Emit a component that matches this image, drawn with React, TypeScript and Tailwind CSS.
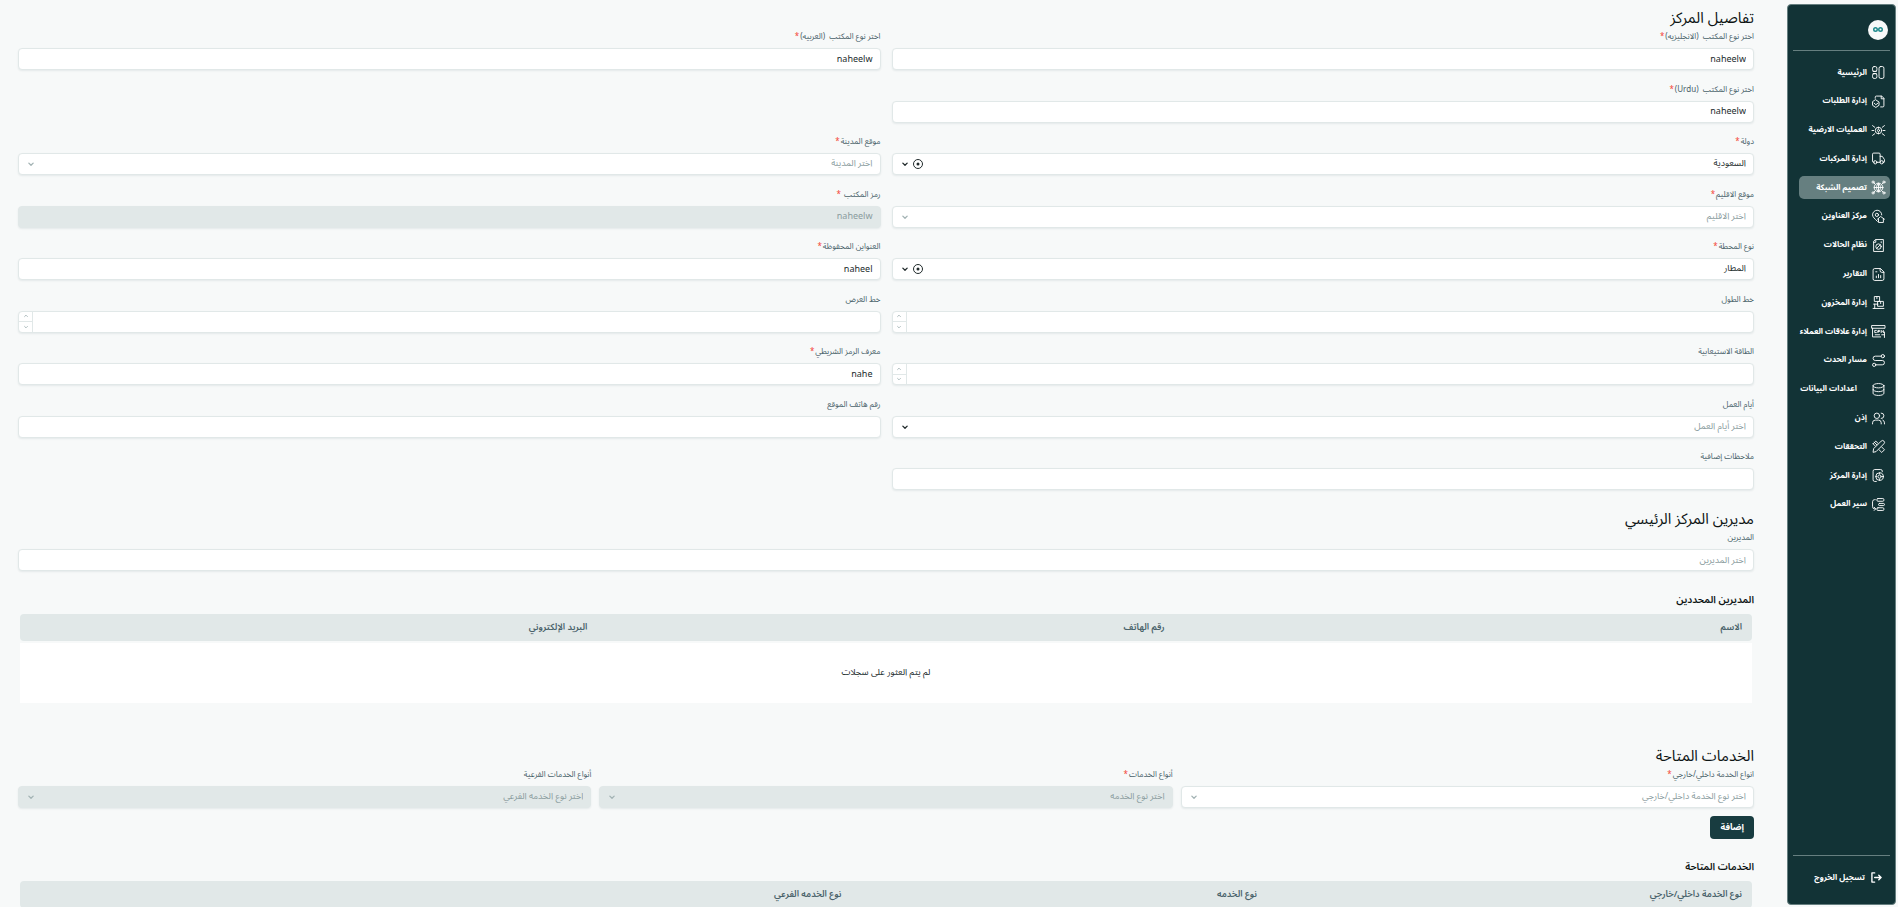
import type { ReactNode } from 'react';
import clsx from 'clsx';

const navIcons: Record<string, ReactNode> = {
    home: (
        <>
            <rect x="13" y="1" width="9" height="22" rx="3" />
            <rect x="1" y="1" width="8" height="9" rx="3" />
            <rect x="1" y="14" width="8" height="9" rx="3" />
            <path d="M2 10h6M2 14h6" />
        </>
    ),
    orders: (
        <>
            <path d="M6 6V4a2 2 0 0 1 2-2h10l4 4v14a2 2 0 0 1-2 2h-4" />
            <path d="M17 2v5h5" />
            <path d="M7 9l6 4v6l-6 4-6-4v-6z" />
            <path d="M4 15l3 3 4-3" />
        </>
    ),
    ground: (
        <>
            <circle cx="12" cy="12" r="6" />
            <circle cx="12" cy="12" r="2" />
            <path d="M0 12h3M21 12h3M1 3l4 3M23 3l-4 3M1 21l4-3M23 21l-4-3M12 6v2M12 16v2" />
        </>
    ),
    truck: (
        <>
            <path d="M4 19H3a2 2 0 0 1-2-2V4a2 2 0 0 1 2-2h10a2 2 0 0 1 2 2v15H9" />
            <path d="M15 8h4l4 6v4a1 1 0 0 1-1 1h-1" />
            <circle cx="6" cy="19" r="3" />
            <circle cx="18" cy="19" r="3" />
        </>
    ),
    network: (
        <>
            <circle cx="12" cy="12" r="8" />
            <path d="M4 12h16M12 4v16M12 4c-5 4-5 12 0 16M12 4c5 4 5 12 0 16" />
            <path d="M6 6L3 3M18 6l3-3M6 18l-3 3M18 18l3 3" />
            <circle cx="2" cy="2" r="2" />
            <circle cx="22" cy="2" r="2" />
            <circle cx="2" cy="22" r="2" />
            <circle cx="22" cy="22" r="2" />
        </>
    ),
    address: (
        <>
            <path d="M10 21C5 16 1 13 1 9a8 8 0 0 1 17 0" />
            <circle cx="9" cy="9" r="3" />
            <path d="M10 17l6-5 7 5M12 16v7h9v-7" />
        </>
    ),
    status: (
        <>
            <path d="M7 1h14v22H3V5z" />
            <path d="M3 6h4V2" />
            <circle cx="12" cy="14" r="5" />
            <path d="M9 17l6-6M17 5v2" />
        </>
    ),
    reports: (
        <>
            <path d="M15 1H5a3 3 0 0 0-3 3v16a3 3 0 0 0 3 3h14a3 3 0 0 0 3-3V8z" />
            <path d="M15 1v4a3 3 0 0 0 3 3h4M8 18v-3M12 18v-6M16 18v-4M7 7h2" />
        </>
    ),
    inventory: (
        <>
            <rect x="5" y="1" width="9" height="9" />
            <rect x="11" y="10" width="10" height="9" />
            <path d="M9 1v4M16 10v4M3 15h8M2 23h20M5 15v8" />
        </>
    ),
    crm: (
        <>
            <path d="M0 1h24v5H0zM1 6v16h15M23 13v10M18 18h5M6 18h8" />
            <path d="M8 10H5v4h3M11 14v-4h3v2h-3M17 14v-4l2 2 2-2v4" />
        </>
    ),
    route: (
        <>
            <circle cx="4" cy="20" r="3" />
            <circle cx="20" cy="4" r="3" />
            <path d="M17 4H6a4 4 0 0 0 0 8h13a4 4 0 0 1 0 8H8" />
        </>
    ),
    database: (
        <>
            <ellipse cx="12" cy="5" rx="10" ry="4" />
            <path d="M2 5v14c0 2 4 4 10 4s10-2 10-4V5M2 12c0 2 4 4 10 4s10-2 10-4" />
        </>
    ),
    users: (
        <>
            <circle cx="9" cy="7" r="5" />
            <path d="M1 22v-2a5 5 0 0 1 5-5h6a5 5 0 0 1 5 5v2M17 2a5 5 0 0 1 0 10M20 15a5 5 0 0 1 3 5v2" />
        </>
    ),
    checks: (
        <>
            <path d="M2 22l1-6L17 2a3 3 0 0 1 5 5L8 21z" />
            <path d="M9 9L4 4M2 7l5-5 4 4M18 13l5 5-5 5-5-5M2 7l4 4" />
        </>
    ),
    center: (
        <>
            <path d="M8 23H5a3 3 0 0 1-3-3V4a3 3 0 0 1 3-3h11a3 3 0 0 1 3 3v1" />
            <circle cx="14" cy="14" r="7" />
            <circle cx="14" cy="14" r="3" />
            <path d="M14 7v2M14 19v2M7 14h2M19 14h2" />
        </>
    ),
    workflow: (
        <>
            <rect x="9" y="1" width="13" height="5" rx="2" />
            <rect x="12" y="10" width="11" height="4" rx="2" />
            <rect x="9" y="18" width="13" height="5" rx="2" />
            <path d="M6 3H5a4 4 0 0 0-4 4v9a4 4 0 0 0 4 4h1M4 17l3 3-3 3" />
        </>
    ),
};

const navItems = [
    { icon: 'home', label: 'الرئيسية' },
    { icon: 'orders', label: 'إدارة الطلبات' },
    { icon: 'ground', label: 'العمليات الارضية' },
    { icon: 'truck', label: 'إدارة المركبات' },
    { icon: 'network', label: 'تصميم الشبكة', active: true },
    { icon: 'address', label: 'مركز العناوين' },
    { icon: 'status', label: 'نظام الحالات' },
    { icon: 'reports', label: 'التقارير' },
    { icon: 'inventory', label: 'إدارة المخزون' },
    { icon: 'crm', label: 'إدارة علاقات العملاء' },
    { icon: 'route', label: 'مسار الحدث' },
    { icon: 'database', label: 'اعدادات البيانات', indent: true },
    { icon: 'users', label: 'إذن' },
    { icon: 'checks', label: 'التحققات' },
    { icon: 'center', label: 'إدارة المركز' },
    { icon: 'workflow', label: 'سير العمل' },
];

function NavIcon({ name }: { name: string }) {
    return (
        <svg
            viewBox="0 0 24 24"
            className="size-[13px] shrink-0 overflow-visible"
            fill="none"
            stroke="currentColor"
            strokeWidth="1.7"
            strokeLinecap="round"
            strokeLinejoin="round"
            aria-hidden="true"
        >
            {navIcons[name]}
        </svg>
    );
}

function Chevron({ up, className }: { up?: boolean; className?: string }) {
    return (
        <svg viewBox="0 0 14 14" className={className} fill="none" stroke="currentColor" strokeWidth="3" strokeLinecap="round" strokeLinejoin="round" aria-hidden="true">
            <path d={up ? 'M2 9l5-5 5 5' : 'M2 5l5 5 5-5'} />
        </svg>
    );
}

function Sidebar() {
    return (
        <aside className="ms-[2px] mt-1 mb-[2px] flex w-[109px] shrink-0 flex-col rounded border border-[#667f80] bg-[#123336] px-[5px] text-white">
            <div className="flex h-[46px] items-center border-b border-[#667f80] px-[2px] pt-1">
                <div className="flex size-5 items-center justify-center rounded-full bg-[#f7f9f9] text-[#1f8a8c]">
                    <svg viewBox="0 0 20 10" className="h-[5px] w-[10px]" fill="none" stroke="currentColor" strokeWidth="3" aria-label="الشعار">
                        <circle cx="5" cy="5" r="3.5" />
                        <circle cx="15" cy="5" r="3.5" />
                    </svg>
                </div>
            </div>
            <nav className="mt-[10px] flex-1">
                <ul className="grid min-h-[455px] content-between">
                    {navItems.map((item) => (
                        <li key={item.icon}>
                            <a
                                href="#"
                                className={clsx(
                                    'me-[6px] flex h-[23px] items-center gap-[5px] rounded-[5px] ps-[5px] text-[8px] font-bold whitespace-nowrap',
                                    item.active && 'bg-[#667f80]',
                                )}
                            >
                                <NavIcon name={item.icon} />
                                <span className={clsx(item.indent && 'ms-[10px]')}>{item.label}</span>
                            </a>
                        </li>
                    ))}
                </ul>
            </nav>
            <div className="flex h-[49px] items-center border-t border-[#667f80] pb-[5px]">
                <button type="button" className="flex items-center gap-[6px] ps-2 text-[8px] font-bold">
                    <svg viewBox="0 0 24 24" className="size-[11px]" fill="none" stroke="currentColor" strokeWidth="3" strokeLinecap="round" strokeLinejoin="round" aria-hidden="true">
                        <path d="M8 2H2v20h6M8 12h14M17 7l5 5-5 5" />
                    </svg>
                    تسجيل الخروج
                </button>
            </div>
        </aside>
    );
}

type FieldProps = {
    id: string;
    label: string;
    required?: boolean;
    kind?: 'text' | 'select' | 'number';
    value?: string;
    placeholder?: string;
    disabled?: boolean;
    clearable?: boolean;
    faded?: boolean;
    className?: string;
};

const controlClass =
    'block h-[22px] w-full rounded border border-[#e1e8e8] px-[7px] text-start text-[9px] shadow-[0_1px_2px_rgba(18,55,60,0.08)] outline-none placeholder:text-[#8a9c9e]';

function Field({ id, label, required, kind = 'text', value, placeholder, disabled, clearable, faded, className }: FieldProps) {
    const tone = disabled ? 'bg-[#e1e8e8] text-[#8a9c9e]' : 'bg-white text-[#212b2c]';

    return (
        <div className={className}>
            <label htmlFor={id} className="block h-[15px] text-[8px] leading-[15px] whitespace-pre text-[#49626a]">
                {label}
                {required && <span className="ms-px text-[#f44336]">*</span>}
            </label>
            <div className="relative mt-1">
                {kind === 'select' ? (
                    <select
                        id={id}
                        disabled={disabled}
                        className={clsx(controlClass, 'appearance-none opacity-100', disabled ? 'bg-[#e1e8e8]' : 'bg-white', value ? 'text-[#212b2c]' : 'text-[#8a9c9e]')}
                    >
                        <option>{value ?? placeholder}</option>
                    </select>
                ) : (
                    <input
                        id={id}
                        type={kind}
                        defaultValue={value}
                        placeholder={placeholder}
                        disabled={disabled}
                        className={clsx(controlClass, tone, kind === 'number' && 'appearance-none')}
                    />
                )}
                {kind === 'select' && (
                    <div className="pointer-events-none absolute inset-y-0 end-[10px] flex items-center gap-[5px] text-[#212b2c]">
                        {clearable && (
                            <svg viewBox="0 0 20 20" className="size-[10px]" fill="none" stroke="currentColor" strokeWidth="2" aria-hidden="true">
                                <circle cx="10" cy="10" r="9" />
                                <circle cx="10" cy="10" r="3" fill="currentColor" stroke="none" />
                            </svg>
                        )}
                        <Chevron className={clsx('size-[6px]', faded && 'text-[#a3b3b4]')} />
                    </div>
                )}
                {kind === 'number' && (
                    <div className="absolute inset-y-px end-px flex w-[14px] flex-col divide-y divide-[#e1e8e8] border-s border-[#e1e8e8] text-[#a3b3b4]">
                        <button type="button" aria-label="زيادة" className="flex flex-1 items-center justify-center">
                            <Chevron up className="size-[4px]" />
                        </button>
                        <button type="button" aria-label="إنقاص" className="flex flex-1 items-center justify-center">
                            <Chevron className="size-[4px]" />
                        </button>
                    </div>
                )}
            </div>
        </div>
    );
}

function SectionTitle({ children }: { children: ReactNode }) {
    return <h2 className="mb-px h-5 text-[15px] leading-5 text-[#0d1414]">{children}</h2>;
}

function RecordsTable({ columns, widths, id }: { columns: string[]; widths: string[]; id: string }) {
    return (
        <table aria-labelledby={id} className="mx-[2px] w-[calc(100%-4px)] table-fixed border-separate border-spacing-0 text-[9px]">
            <thead>
                <tr className="h-[27px] text-[#49626a]">
                    {columns.map((column, i) => (
                        <th key={column} scope="col" className={clsx('bg-[#e1e8e8] px-[10px] text-start font-semibold first:rounded-s last:rounded-e', widths[i])}>
                            {column}
                        </th>
                    ))}
                </tr>
            </thead>
            <tbody>
                <tr>
                    <td colSpan={columns.length} className="h-[62px] border-t-2 border-[#f7f9f9] bg-white text-center text-[#212b2c]">
                        لم يتم العثور على سجلات
                    </td>
                </tr>
            </tbody>
        </table>
    );
}

export default function App() {
    return (
        <div dir="rtl" className="flex h-screen overflow-hidden bg-[#f7f9f9] font-['Noto_Sans_Arabic','Noto_Sans',sans-serif]">
            <Sidebar />
            <main className="flex-1 overflow-y-auto ps-[33px] pe-[18px] [scrollbar-width:none]">
                <section className="pt-2">
                    <SectionTitle>تفاصيل المركز</SectionTitle>
                    <div className="grid min-h-[461px] grid-cols-2 content-between gap-x-[11px]">
                        <Field id="name-en" label="اختر نوع المكتب  (الانجليزيه)" required value="naheelw" />
                        <Field id="name-ar" label="اختر نوع المكتب  (العربيه)" required value="naheelw" />
                        <Field id="name-ur" label="اختر نوع المكتب  (Urdu)" required value="naheelw" />
                        <Field id="country" label="دولة" required kind="select" value="السعودية" clearable className="col-start-1" />
                        <Field id="city" label="موقع المدينة" required kind="select" placeholder="اختر المدينة" faded />
                        <Field id="region" label="موقع الاقليم" required kind="select" placeholder="اختر الاقليم" faded />
                        <Field id="code" label="رمز المكتب " required value="naheelw" disabled />
                        <Field id="station" label="نوع المحطة" required kind="select" value="المطار" clearable />
                        <Field id="addresses" label="العنواين المحفوظة" required value="naheel" />
                        <Field id="longitude" label="خط الطول" kind="number" />
                        <Field id="latitude" label="خط العرض" kind="number" />
                        <Field id="capacity" label="الطاقة الاستيعابية" kind="number" />
                        <Field id="barcode" label="معرف الرمز الشريطي" required value="nahe" />
                        <Field id="days" label="أيام العمل" kind="select" placeholder="اختر أيام العمل" />
                        <Field id="phone" label="رقم هاتف الموقع" />
                        <Field id="notes" label="ملاحظات إضافية" />
                    </div>
                </section>

                <section className="mt-[19px]">
                    <SectionTitle>مديرين المركز الرئيسي</SectionTitle>
                    <Field id="managers" label="المديرين" placeholder="اختر المديرين" />
                    <h3 id="managers-title" className="mt-5 mb-[5px] h-[18px] text-[10px] leading-[18px] font-semibold text-[#0d1414]">
                        المديرين المحددين
                    </h3>
                    <RecordsTable id="managers-title" columns={['الاسم', 'رقم الهاتف', 'البريد الإلكتروني']} widths={['w-1/3', 'w-1/3', 'w-1/3']} />
                </section>

                <section className="mt-[43px]">
                    <SectionTitle>الخدمات المتاحة</SectionTitle>
                    <div className="grid grid-cols-3 gap-x-2">
                        <Field id="service-scope" label="انواع الخدمة داخلي/خارجي" required kind="select" placeholder="اختر نوع الخدمة داخلي/خارجي" faded />
                        <Field id="service-type" label="أنواع الخدمات" required kind="select" placeholder="اختر نوع الخدمه" disabled faded />
                        <Field id="service-sub" label="أنواع الخدمات الفرعية" kind="select" placeholder="اختر نوع الخدمه الفرعي" disabled faded />
                    </div>
                    <button type="button" className="mt-2 block h-[23px] rounded bg-[#183c40] px-[10px] text-[9px] font-bold text-white">
                        إضافة
                    </button>
                    <h3 id="services-title" className="mt-[19px] mb-[5px] h-[18px] text-[10px] leading-[18px] font-semibold text-[#0d1414]">
                        الخدمات المتاحة
                    </h3>
                    <RecordsTable id="services-title" columns={['نوع الخدمة داخلي/خارجي', 'نوع الخدمه', 'نوع الخدمه الفرعي']} widths={['w-[28%]', 'w-[24%]', 'w-[48%]']} />
                </section>
            </main>
        </div>
    );
}
